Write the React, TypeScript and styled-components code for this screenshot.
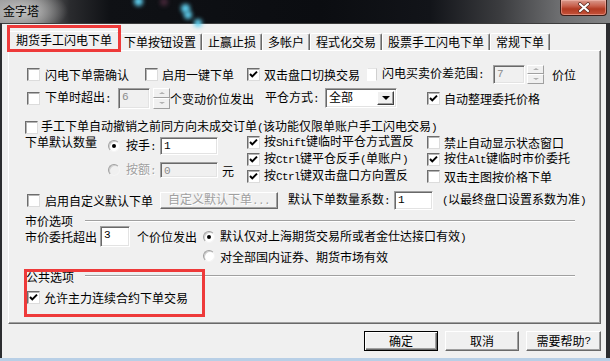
import React from "react";
import styled, { createGlobalStyle, css } from "styled-components";

const Global = createGlobalStyle`
  html, body { margin: 0; padding: 0; background: #000; }
  body {
    font-family: "Noto Sans CJK SC", "Noto Sans", sans-serif;
    font-size: 12px;
    color: #000;
  }
  * { box-sizing: border-box; }
`;

const Window = styled.div`
  width: 610px;
  height: 361px;
  position: relative;
  overflow: hidden;
  display: flex;
  flex-direction: column;
  background: linear-gradient(to bottom, #2c2d30 0, #2c2d30 358px, #b8cfe6 358px);
`;

const TitleBar = styled.div`
  height: 23px;
  flex: none;
  position: relative;
  display: flex;
  align-items: flex-start;
  background:
    radial-gradient(ellipse 46px 22px at 22px 11px, rgba(200, 200, 200, 0.95), rgba(160, 160, 160, 0) 100%),
    linear-gradient(90deg, #8e8e8e 0, #6e6e6e 40px, #2a2b2e 70px, #0f1115 110px, #0b0d11 320px, #121419 430px, #3b3c3f 500px, #6e6f71 560px, #838486 610px);
`;

const Glow = styled.span<{ $x: number; $y: number; $s: number; $c?: string }>`
  position: absolute;
  left: ${(p) => p.$x}px;
  top: ${(p) => p.$y}px;
  width: ${(p) => p.$s}px;
  height: ${(p) => p.$s}px;
  border-radius: 50%;
  background: ${(p) => p.$c || "#5fd0f0"};
  filter: blur(2px);
`;

const TitleText = styled.span`
  position: relative;
  padding: 5px 0 0 3px;
  line-height: 12px;
  font-size: 12px;
  color: #000;
`;

const CloseBtn = styled.span`
  position: relative;
  margin-left: auto;
  margin-right: 3px;
  width: 47px;
  height: 16px;
  border: 1px solid #3d1c16;
  border-top: none;
  border-radius: 0 0 4px 4px;
  background: linear-gradient(to bottom, #d99a8d 0, #c8604c 40%, #b23a22 60%, #c5533a 100%);
  box-shadow: inset 0 0 0 1px rgba(255, 200, 190, 0.45);
  display: flex;
  align-items: center;
  justify-content: center;
`;

const Client = styled.div`
  flex: 1;
  margin: 0 4px 3px 2px;
  background: #f0f0f0;
  border-top: 1px solid #3c3c3c;
  display: flex;
  flex-direction: column;
`;

const TabStrip = styled.div`
  height: 26px;
  flex: none;
  display: flex;
  align-items: flex-end;
  padding-left: 8px;
`;

const Tab = styled.div<{ $active?: boolean }>`
  position: relative;
  height: 17px;
  padding: 0 5px;
  border: 1px solid;
  border-bottom: none;
  border-color: #fff #696969 transparent #fff;
  box-shadow: inset -1px 0 #a0a0a0;
  border-radius: 2px 2px 0 0;
  background: #f0f0f0;
  display: flex;
  align-items: center;
  white-space: nowrap;
  line-height: 14px;
  ${(p) =>
    p.$active &&
    css`
      height: 20px;
      margin: 0 -2px -1px;
      padding: 0 7px 3px;
      z-index: 2;
    `}
`;

const Annot = styled.span<{ $l: number; $t: number; $w: number; $h: number }>`
  position: absolute;
  left: ${(p) => p.$l}px;
  top: ${(p) => p.$t}px;
  width: ${(p) => p.$w}px;
  height: ${(p) => p.$h}px;
  border: 3px solid #ee3a3a;
  z-index: 5;
  pointer-events: none;
`;

const Panel = styled.div`
  position: relative;
  margin-left: 6px;
  width: 593px;
  height: 274px;
  flex: none;
  border: 1px solid;
  border-color: #fff #696969 #696969 #fff;
  box-shadow: inset -1px -1px #a0a0a0;
  display: flex;
  flex-direction: column;
`;

const Row = styled.div<{ $h: number; $mt?: number; $pl?: number }>`
  display: flex;
  align-items: center;
  flex: none;
  height: ${(p) => p.$h}px;
  margin-top: ${(p) => p.$mt || 0}px;
  padding-left: ${(p) => p.$pl || 0}px;
`;

const Cell = styled.div<{ $w?: number; $ml?: number }>`
  flex: none;
  display: flex;
  align-items: center;
  white-space: nowrap;
  line-height: 13px;
  ${(p) => p.$w !== undefined && css`width: ${p.$w}px;`}
  margin-left: ${(p) => p.$ml || 0}px;
`;

const Txt = styled.span<{ $gray?: boolean; $ml?: number; $w?: number }>`
  white-space: nowrap;
  line-height: 13px;
  flex: none;
  margin-left: ${(p) => p.$ml || 0}px;
  ${(p) => p.$w !== undefined && css`width: ${p.$w}px;`}
  ${(p) =>
    p.$gray &&
    css`
      color: #a0a0a0;
      text-shadow: 1px 1px 0 #fff;
    `}
`;

const Mono = styled.span`
  font-family: "Liberation Mono", "DejaVu Sans Mono", monospace;
  font-size: 11px;
  letter-spacing: -0.6px;
`;

const Box = styled.span<{ $ghost?: boolean }>`
  flex: none;
  width: 13px;
  height: 13px;
  background: #fff;
  border: 1px solid;
  border-color: #6d6d6d #dcdcdc #dcdcdc #6d6d6d;
  box-shadow: inset 1px 1px #b4b4b4;
  display: flex;
  align-items: center;
  justify-content: center;
  ${(p) =>
    p.$ghost &&
    css`
      width: 10px;
      border-color: #e4e4e4 #d0d0d0 transparent transparent;
      box-shadow: none;
    `}
`;

const Radio = styled.span<{ $disabled?: boolean }>`
  flex: none;
  width: 12px;
  height: 12px;
  border-radius: 50%;
  background: ${(p) => (p.$disabled ? "#f0f0f0" : "#fff")};
  border: 1px solid;
  border-color: #a0a0a0 #f4f4f4 #f4f4f4 #a0a0a0;
  box-shadow: inset 1px 1px #cfcfcf;
  display: flex;
  align-items: center;
  justify-content: center;
`;

const Dot = styled.span`
  width: 4px;
  height: 4px;
  border-radius: 50%;
  background: #000;
`;

const Field = styled.div<{ $w: number; $h: number; $disabled?: boolean }>`
  flex: none;
  width: ${(p) => p.$w}px;
  height: ${(p) => p.$h}px;
  background: ${(p) => (p.$disabled ? "#f0f0f0" : "#fff")};
  color: ${(p) => (p.$disabled ? "#8c8c8c" : "#000")};
  border: 1px solid;
  border-color: #a0a0a0 #fff #fff #a0a0a0;
  box-shadow: inset 1px 1px #696969, inset -1px -1px #e3e3e3;
  padding: 1px 0 0 3px;
  line-height: 14px;
  display: flex;
  align-items: flex-start;
`;

const Spin = styled.span<{ $h: number }>`
  flex: none;
  width: 17px;
  height: ${(p) => p.$h}px;
  display: flex;
  flex-direction: column;
`;

const SpinBtn = styled.span`
  flex: 1;
  background: #f0f0f0;
  border: 1px solid;
  border-color: #fff #a0a0a0 #a0a0a0 #fff;
  display: flex;
  align-items: center;
  justify-content: center;
`;

const Tri = styled.span<{ $down?: boolean; $dark?: boolean }>`
  width: 0;
  height: 0;
  border-left: ${(p) => (p.$dark ? 4 : 3)}px solid transparent;
  border-right: ${(p) => (p.$dark ? 4 : 3)}px solid transparent;
  ${(p) =>
    p.$down
      ? css`border-top: ${p.$dark ? 4 : 2}px solid ${p.$dark ? "#000" : "#b0b0b0"};`
      : css`border-bottom: 2px solid #b0b0b0;`}
`;

const Select = styled.div`
  flex: none;
  width: 72px;
  height: 20px;
  background: #fff;
  border: 1px solid;
  border-color: #a0a0a0 #fff #fff #a0a0a0;
  box-shadow: inset 1px 1px #696969, inset -1px -1px #e3e3e3;
  display: flex;
  align-items: flex-start;
  padding: 1px 2px 0 3px;
  line-height: 14px;
`;

const SelText = styled.span`
  flex: 1;
`;

const DropBtn = styled.span`
  width: 17px;
  height: 14px;
  margin-top: 1px;
  background: #f0f0f0;
  border: 1px solid;
  border-color: #fff #404040 #404040 #fff;
  box-shadow: inset -1px -1px #a0a0a0;
  display: flex;
  align-items: center;
  justify-content: center;
`;

const PushBtn = styled.div<{ $w: number; $h: number }>`
  flex: none;
  width: ${(p) => p.$w}px;
  height: ${(p) => p.$h}px;
  background: #f0f0f0;
  border: 1px solid;
  border-color: #fff #696969 #696969 #fff;
  box-shadow: inset -1px -1px #a0a0a0;
  display: flex;
  align-items: center;
  justify-content: center;
  line-height: 14px;
  white-space: nowrap;
`;

const Col = styled.div<{ $w: number; $pt?: number; $gap?: number }>`
  flex: none;
  width: ${(p) => p.$w}px;
  padding-top: ${(p) => p.$pt || 0}px;
  display: flex;
  flex-direction: column;
  gap: ${(p) => p.$gap || 0}px;
`;

const Block = styled.div<{ $mt: number; $pl: number; $h: number }>`
  display: flex;
  flex: none;
  height: ${(p) => p.$h}px;
  margin-top: ${(p) => p.$mt}px;
  padding-left: ${(p) => p.$pl}px;
`;

const Etch = styled.span<{ $ml: number; $w: number }>`
  flex: none;
  margin-left: ${(p) => p.$ml}px;
  width: ${(p) => p.$w}px;
  height: 2px;
  border-top: 1px solid #a0a0a0;
  border-bottom: 1px solid #fff;
`;

const ButtonBar = styled.div`
  display: flex;
  justify-content: flex-end;
  gap: 7px;
  padding-right: 5px;
  margin-top: 7px;
`;

const DlgButton = styled.div<{ $default?: boolean; $w: number }>`
  width: ${(p) => p.$w}px;
  height: 20px;
  background: #f0f0f0;
  border: 1px solid;
  border-color: #fff #696969 #696969 #fff;
  box-shadow: inset -1px -1px #a0a0a0;
  display: flex;
  align-items: center;
  justify-content: center;
  line-height: 14px;
  ${(p) =>
    p.$default &&
    css`
      border-color: #000;
      box-shadow: inset 1px 1px #fff, inset -1px -1px #696969, inset -2px -2px #a0a0a0;
    `}
`;

const Check = () => (
  <svg width="9" height="9" viewBox="0 0 9 9">
    <path d="M1 4 L3.3 6.4 L8 1.6" fill="none" stroke="#000" strokeWidth="2" />
  </svg>
);

type CIProps = {
  w?: number;
  ml?: number;
  gap?: number;
  checked?: boolean;
  ghost?: boolean;
  children: React.ReactNode;
};

const CheckItem = ({ w, ml, gap = 4, checked, ghost, children }: CIProps) => (
  <Cell $w={w} $ml={ml}>
    <Box $ghost={ghost}>{checked && <Check />}</Box>
    <Txt $ml={gap}>{children}</Txt>
  </Cell>
);

const Spinner = ({ h }: { h: number }) => (
  <Spin $h={h}>
    <SpinBtn>
      <Tri />
    </SpinBtn>
    <SpinBtn>
      <Tri $down />
    </SpinBtn>
  </Spin>
);

const tabs = ["下单按钮设置", "止赢止损", "多帐户", "程式化交易", "股票手工闪电下单", "常规下单"];

export default function App() {
  return (
    <>
      <Global />
      <Window>
        <TitleBar>
          <Glow $x={134} $y={-3} $s={9} />
          <Glow $x={160} $y={-2} $s={8} $c="rgba(120,60,90,0.5)" />
          <Glow $x={181} $y={4} $s={9} />
          <Glow $x={184} $y={11} $s={8} />
          <Glow $x={194} $y={19} $s={8} />
          <TitleText>金字塔</TitleText>
          <CloseBtn>
            <svg width="14" height="11" viewBox="0 0 14 11">
              <path d="M3 2 L11 9 M11 2 L3 9" stroke="#5a2a20" strokeWidth="3.6" strokeLinecap="round" />
              <path d="M3 2 L11 9 M11 2 L3 9" stroke="#fff" strokeWidth="2.2" strokeLinecap="round" />
            </svg>
          </CloseBtn>
        </TitleBar>
        <Client>
          <TabStrip>
            <Tab $active>
              期货手工闪电下单
              <Annot $l={-2} $t={-7} $w={114} $h={27} />
            </Tab>
            {tabs.map((t) => (
              <Tab key={t}>{t}</Tab>
            ))}
          </TabStrip>
          <Panel>
            <Row $h={20} $mt={13} $pl={18}>
              <CheckItem w={118} gap={5}>闪电下单需确认</CheckItem>
              <CheckItem w={102} gap={4}>启用一键下单</CheckItem>
              <CheckItem w={120} gap={4} checked>双击盘口切换交易</CheckItem>
              <CheckItem w={126} gap={5} ghost>
                闪电买卖价差范围<Mono>:</Mono>
              </CheckItem>
              <Field $w={32} $h={19} $disabled>
                <Mono>7</Mono>
              </Field>
              <Cell $ml={2}>
                <Spinner h={19} />
              </Cell>
              <Txt $ml={8}>价位</Txt>
            </Row>
            <Row $h={22} $mt={3} $pl={18}>
              <CheckItem w={91} gap={5}>
                下单时超出<Mono>:</Mono>
              </CheckItem>
              <Field $w={32} $h={21} $disabled>
                <Mono>6</Mono>
              </Field>
              <Cell $ml={3}>
                <Spinner h={21} />
              </Cell>
              <Txt $w={95}>个变动价位发出</Txt>
              <Txt $w={60}>
                平仓方式<Mono>:</Mono>
              </Txt>
              <Select>
                <SelText>全部</SelText>
                <DropBtn>
                  <Tri $down $dark />
                </DropBtn>
              </Select>
              <CheckItem ml={30} gap={4} checked>自动整理委托价格</CheckItem>
            </Row>
            <Row $h={14} $mt={11} $pl={16}>
              <CheckItem gap={3}>
                手工下单自动撤销之前同方向未成交订单<Mono>(</Mono>该功能仅限单账户手工闪电交易<Mono>)</Mono>
              </CheckItem>
            </Row>
            <Block $mt={0} $pl={16} $h={50}>
              <Col $w={83} $pt={1}>
                <Txt>下单默认数量</Txt>
              </Col>
              <Col $w={139} $pt={3} $gap={7}>
                <Row $h={18}>
                  <Radio>
                    <Dot />
                  </Radio>
                  <Txt $ml={6} $w={34}>
                    按手<Mono>:</Mono>
                  </Txt>
                  <Field $w={58} $h={18}>
                    <Mono>1</Mono>
                  </Field>
                </Row>
                <Row $h={16}>
                  <Radio $disabled />
                  <Txt $ml={6} $w={34} $gray>
                    按额<Mono>:</Mono>
                  </Txt>
                  <Field $w={58} $h={16} $disabled>
                    <Mono>0</Mono>
                  </Field>
                  <Txt $ml={4}>元</Txt>
                </Row>
              </Col>
              <Col $w={180} $gap={1}>
                <Row $h={16}>
                  <CheckItem checked>
                    按<Mono>Shift</Mono>键临时平仓方式置反
                  </CheckItem>
                </Row>
                <Row $h={16}>
                  <CheckItem checked>
                    按<Mono>Ctrl</Mono>键平仓反手<Mono>(</Mono>单账户<Mono>)</Mono>
                  </CheckItem>
                </Row>
                <Row $h={16}>
                  <CheckItem checked>
                    按<Mono>Ctrl</Mono>键双击盘口方向置反
                  </CheckItem>
                </Row>
              </Col>
              <Col $w={160} $gap={1}>
                <Row $h={16}>
                  <CheckItem>禁止自动显示状态窗口</CheckItem>
                </Row>
                <Row $h={16}>
                  <CheckItem checked>
                    按住<Mono>Alt</Mono>键临时市价委托
                  </CheckItem>
                </Row>
                <Row $h={16}>
                  <CheckItem>双击主图按价格下单</CheckItem>
                </Row>
              </Col>
            </Block>
            <Row $h={20} $mt={6} $pl={18}>
              <CheckItem w={133} gap={5}>启用自定义默认下单</CheckItem>
              <PushBtn $w={118} $h={17}>
                <Txt $gray>
                  自定义默认下单<Mono>...</Mono>
                </Txt>
              </PushBtn>
              <Txt $ml={10} $w={106}>
                默认下单数量系数<Mono>:</Mono>
              </Txt>
              <Field $w={39} $h={19}>
                <Mono>1</Mono>
              </Field>
              <Txt $ml={9}>
                <Mono>(</Mono>以最终盘口设置系数为准<Mono>)</Mono>
              </Txt>
            </Row>
            <Row $h={11} $mt={5} $pl={16}>
              <Txt>市价选项</Txt>
              <Etch $ml={12} $w={490} />
            </Row>
            <Row $h={21} $pl={16}>
              <Txt $w={75}>市价委托超出</Txt>
              <Field $w={30} $h={21}>
                <Mono>3</Mono>
              </Field>
              <Txt $ml={7} $w={66}>
                个价位发出
              </Txt>
              <Radio>
                <Dot />
              </Radio>
              <Txt $ml={5}>
                默认仅对上海期货交易所或者金仕达接口有效<Mono>)</Mono>
              </Txt>
            </Row>
            <Row $h={16} $mt={1} $pl={194}>
              <Radio />
              <Txt $ml={5}>对全部国内证券、期货市场有效</Txt>
            </Row>
            <Row $h={12} $mt={6} $pl={17}>
              <Txt>公共选项</Txt>
              <Etch $ml={11} $w={490} />
            </Row>
            <Row $h={16} $mt={7} $pl={18}>
              <CheckItem gap={4} checked>允许主力连续合约下单交易</CheckItem>
            </Row>
            <Annot $l={15} $t={218} $w={181} $h={48} />
          </Panel>
          <ButtonBar>
            <DlgButton $default $w={74}>确定</DlgButton>
            <DlgButton $w={74}>取消</DlgButton>
            <DlgButton $w={75}>
              需要帮助<Mono>?</Mono>
            </DlgButton>
          </ButtonBar>
        </Client>
      </Window>
    </>
  );
}
